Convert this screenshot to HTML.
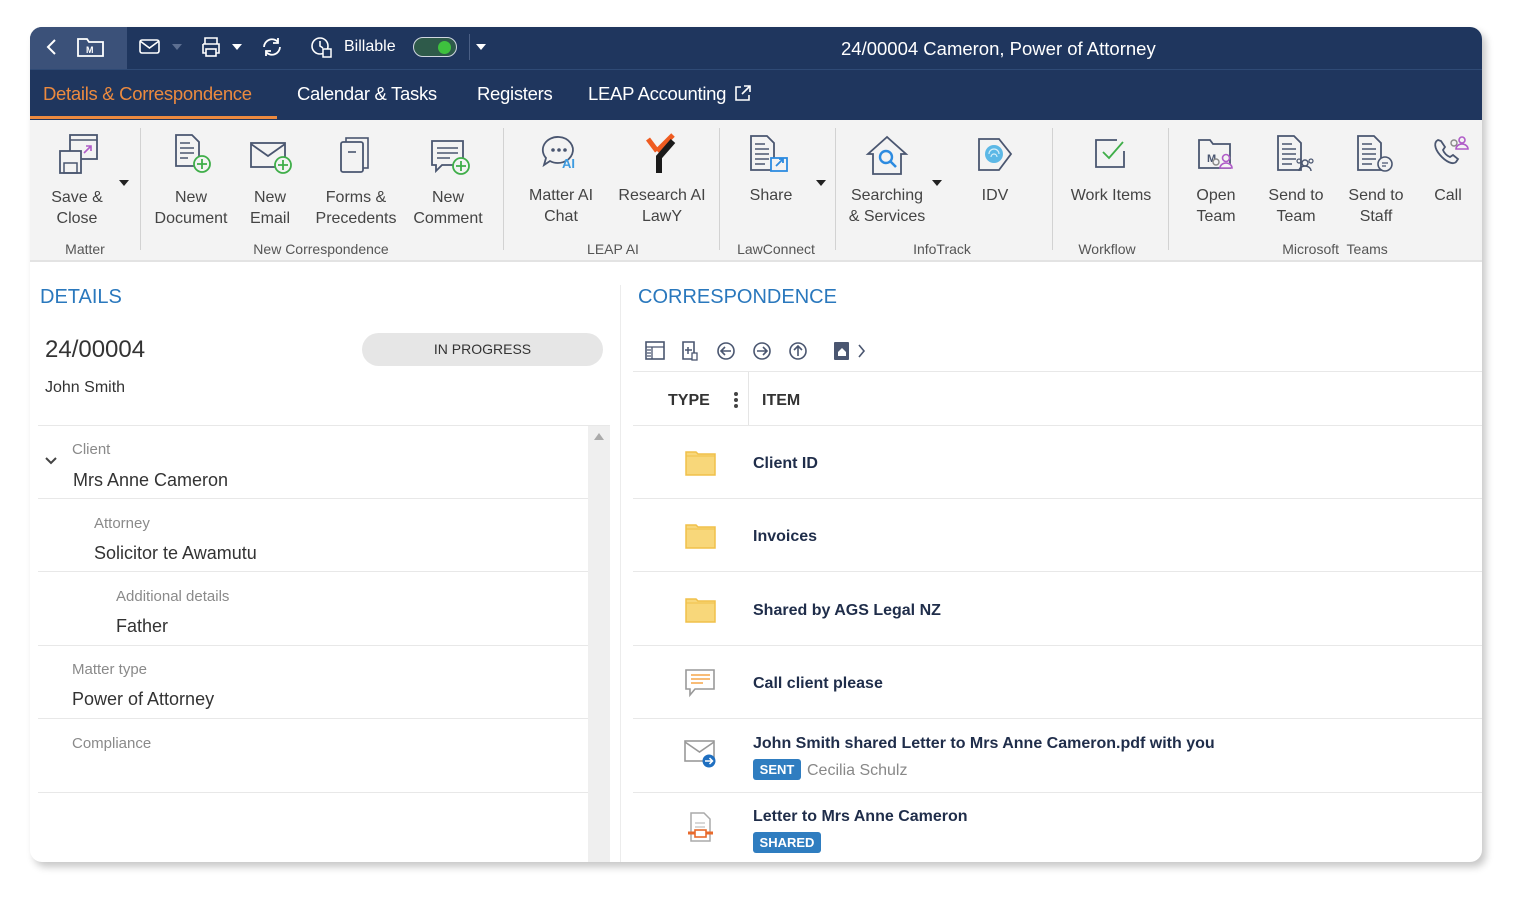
<!DOCTYPE html>
<html><head><meta charset="utf-8">
<style>
*{margin:0;padding:0;box-sizing:border-box}
body{width:1518px;height:900px;background:#fff;font-family:"Liberation Sans",sans-serif;position:relative;overflow:hidden}
.a{position:absolute;white-space:nowrap}
#win{position:absolute;left:30px;top:27px;width:1452px;height:835px;border-radius:12px;overflow:hidden;background:#fff;box-shadow:4px 5px 8px rgba(0,0,0,.22)}
.rb{position:absolute;text-align:center;color:#444;font-size:16px;line-height:21px}
.gl{position:absolute;top:241px;color:#555;font-size:14px;transform:translateX(-50%)}
.sep{position:absolute;top:128px;width:1px;height:122px;background:#d2d2d2}
.lbl{position:absolute;color:#8a8a8a;font-size:15px}
.val{position:absolute;color:#333;font-size:18px}
.hl{position:absolute;height:1px;background:#e8e8e8}
.it{position:absolute;left:753px;color:#1f2d4a;font-size:16px;font-weight:bold}
.tri{position:absolute;width:0;height:0;border-left:5px solid transparent;border-right:5px solid transparent;border-top:6px solid #222}
svg{position:absolute}
</style></head><body>
<div id="win"></div>
<div class="a" style="left:30px;top:27px;width:1452px;height:93px;background:#1f365e;border-radius:12px 12px 0 0"></div>
<div class="a" style="left:30px;top:27px;width:97px;height:42px;background:#3b5179;border-radius:12px 0 0 0"></div>
<div class="a" style="left:30px;top:69px;width:1452px;height:1px;background:#2f4a75"></div>
<svg style="left:44px;top:37px" width="16" height="20"><path d="M11 3 L4 10 L11 17" stroke="#fff" stroke-width="2" fill="none"/></svg>
<svg style="left:76px;top:35px" width="30" height="24"><path d="M2 4h9l2 3h14v14H2z" stroke="#fff" stroke-width="1.8" fill="none"/><text x="10" y="18" font-size="9" fill="#fff" font-family="Liberation Sans" font-weight="bold">M</text></svg>
<svg style="left:139px;top:39px" width="22" height="16"><rect x="1" y="1" width="19" height="13" rx="2" stroke="#fff" stroke-width="1.6" fill="none"/><path d="M1 2l9.5 7L20 2" stroke="#fff" stroke-width="1.6" fill="none"/></svg>
<div class="tri" style="left:172px;top:44px;border-top-color:#5c6f91"></div>
<svg style="left:200px;top:36px" width="22" height="22"><path d="M5 8V2h12v6M3 8h16v9h-3M6 17H3V8" stroke="#fff" stroke-width="1.6" fill="none"/><rect x="6" y="13" width="10" height="7" stroke="#fff" stroke-width="1.6" fill="none"/></svg>
<div class="tri" style="left:232px;top:44px;border-top-color:#fff"></div>
<svg style="left:260px;top:36px" width="24" height="22"><path d="M4 11a8 8 0 0 1 14-5M20 11a8 8 0 0 1-14 5" stroke="#fff" stroke-width="1.8" fill="none"/><path d="M18 2v5h-5M6 20v-5h5" stroke="#fff" stroke-width="1.8" fill="none"/></svg>
<svg style="left:310px;top:36px" width="24" height="24"><circle cx="10" cy="10" r="8" stroke="#fff" stroke-width="1.6" fill="none"/><path d="M10 5v5l3 2" stroke="#fff" stroke-width="1.6" fill="none"/><rect x="13" y="13" width="8" height="8" fill="#1f365e" stroke="#fff" stroke-width="1.5"/></svg>
<div class="a" style="left:344px;top:38px;color:#fff;font-size:16px">Billable</div>
<div class="a" style="left:413px;top:37px;width:44px;height:20px;border-radius:10px;background:#2e5a4a;border:1.5px solid #cfd6e0"></div>
<div class="a" style="left:438px;top:41px;width:13px;height:13px;border-radius:50%;background:#3ec23e"></div>
<div class="a" style="left:469px;top:34px;width:1px;height:26px;background:#4a5f85"></div>
<div class="tri" style="left:476px;top:44px;border-top-color:#fff"></div>
<div class="a" style="left:841px;top:38px;color:#fff;font-size:18.5px">24/00004 Cameron, Power of Attorney</div>
<div class="a" style="left:43px;top:83px;color:#ec8a3f;font-size:18.5px;letter-spacing:-0.3px">Details &amp; Correspondence</div>
<div class="a" style="left:30px;top:116px;width:247px;height:3px;background:#ec8a3f"></div>
<div class="a" style="left:297px;top:83px;color:#fff;font-size:18.5px;letter-spacing:-0.3px">Calendar &amp; Tasks</div>
<div class="a" style="left:477px;top:83px;color:#fff;font-size:18.5px;letter-spacing:-0.3px">Registers</div>
<div class="a" style="left:588px;top:83px;color:#fff;font-size:18.5px;letter-spacing:-0.3px">LEAP Accounting</div>
<svg style="left:734px;top:84px" width="18" height="18"><path d="M7 3H2v13h13v-5M10 2h6v6M16 2L8 10" stroke="#fff" stroke-width="1.6" fill="none"/></svg>
<div class="a" style="left:30px;top:120px;width:1452px;height:142px;background:#f3f3f3;border-bottom:2px solid #e3e3e3"></div>
<div class="sep" style="left:140px"></div><div class="sep" style="left:503px"></div><div class="sep" style="left:719px"></div><div class="sep" style="left:835px"></div><div class="sep" style="left:1052px"></div><div class="sep" style="left:1168px"></div>
<svg style="left:58px;top:133px" width="42" height="44"><rect x="12" y="2" width="27" height="24" stroke="#4a5670" stroke-width="1.8" fill="#f3f3f3"/><path d="M12 7h27" stroke="#4a5670" stroke-width="1.5"/><path d="M26 20l7-7M28 13h5v5" stroke="#b05cc8" stroke-width="1.6" fill="none"/><rect x="2" y="18" width="21" height="22" stroke="#4a5670" stroke-width="1.8" fill="#f3f3f3"/><rect x="6" y="30" width="13" height="10" stroke="#4a5670" stroke-width="1.5" fill="none"/></svg>
<div class="tri" style="left:119px;top:180px"></div>
<svg style="left:174px;top:133px" width="40" height="42"><path d="M2 2h16l7 7v24H2z" stroke="#4a5670" stroke-width="1.8" fill="none"/><path d="M6 10h10M6 15h14M6 20h14M6 25h8" stroke="#4a5670" stroke-width="1.4"/><circle cx="28" cy="31" r="8" fill="#f3f3f3" stroke="#3fae49" stroke-width="1.8"/><path d="M28 26v10M23 31h10" stroke="#3fae49" stroke-width="1.8"/></svg>
<svg style="left:250px;top:141px" width="42" height="36"><rect x="1" y="2" width="34" height="24" stroke="#4a5670" stroke-width="1.8" fill="none"/><path d="M1 3l17 12L35 3" stroke="#4a5670" stroke-width="1.8" fill="none"/><circle cx="33" cy="24" r="8" fill="#f3f3f3" stroke="#3fae49" stroke-width="1.8"/><path d="M33 19v10M28 24h10" stroke="#3fae49" stroke-width="1.8"/></svg>
<svg style="left:339px;top:136px" width="34" height="40"><rect x="7" y="2" width="22" height="30" stroke="#4a5670" stroke-width="1.6" fill="none"/><rect x="2" y="6" width="22" height="30" rx="2" stroke="#4a5670" stroke-width="1.8" fill="#f3f3f3"/><path d="M9 16h8" stroke="#4a5670" stroke-width="1.6"/></svg>
<svg style="left:430px;top:139px" width="42" height="38"><path d="M2 2h31v24H12l-6 6v-6H2z" stroke="#4a5670" stroke-width="1.8" fill="none"/><path d="M7 9h21M7 14h21M7 19h13" stroke="#4a5670" stroke-width="1.4"/><circle cx="31" cy="27" r="8" fill="#f3f3f3" stroke="#3fae49" stroke-width="1.8"/><path d="M31 22v10M26 27h10" stroke="#3fae49" stroke-width="1.8"/></svg>
<svg style="left:541px;top:134px" width="40" height="40"><path d="M18 3a15 13 0 1 1-9 24l-6 4 2-7A15 13 0 0 1 18 3z" stroke="#4a5670" stroke-width="1.8" fill="none"/><circle cx="12" cy="16" r="1.8" fill="#4a5670"/><circle cx="18" cy="16" r="1.8" fill="#4a5670"/><circle cx="24" cy="16" r="1.8" fill="#4a5670"/><text x="21" y="34" font-size="13" font-weight="bold" fill="#3d9be0" font-family="Liberation Sans">AI</text></svg>
<svg style="left:645px;top:133px" width="34" height="44"><path d="M3 6l9 12M12 18l16-16" stroke="#ef5b20" stroke-width="5" fill="none"/><path d="M28 8L14 24v16" stroke="#1a1a1a" stroke-width="6" fill="none"/></svg>
<svg style="left:749px;top:134px" width="42" height="40"><path d="M2 2h16l7 7v27H2z" stroke="#4a5670" stroke-width="1.8" fill="#f3f3f3"/><path d="M6 10h10M6 15h14M6 20h14M6 25h14M6 30h10" stroke="#4a5670" stroke-width="1.4"/><rect x="22" y="24" width="16" height="13" fill="#f3f3f3" stroke="#2d8be0" stroke-width="1.8"/><path d="M27 32l6-6M30 25h4v4" stroke="#2d8be0" stroke-width="1.8" fill="none"/></svg>
<div class="tri" style="left:816px;top:180px"></div>
<svg style="left:865px;top:135px" width="44" height="42"><path d="M22 2L3 19h5v20h28V19h5z" stroke="#4a5670" stroke-width="1.8" fill="none"/><circle cx="21" cy="22" r="6" stroke="#2d8be0" stroke-width="2.4" fill="none"/><path d="M25 26l6 6" stroke="#2d8be0" stroke-width="2.6"/></svg>
<div class="tri" style="left:932px;top:180px"></div>
<svg style="left:976px;top:135px" width="40" height="40"><path d="M3 4h20l12 15-12 16H3z" stroke="#4a5670" stroke-width="1.8" fill="none"/><circle cx="18" cy="19" r="9" fill="#5cb8e6"/><path d="M13 19a5 5 0 0 1 10 0M15 22a3 3 0 0 1 6 0" stroke="#d6eef9" stroke-width="1.2" fill="none"/></svg>
<svg style="left:1093px;top:137px" width="38" height="34"><path d="M24 3H3v27h28V14" stroke="#4a5670" stroke-width="1.8" fill="none"/><path d="M10 15l6 6 14-16" stroke="#3fae49" stroke-width="1.8" fill="none"/></svg>
<svg style="left:1197px;top:138px" width="40" height="36"><path d="M2 2h11l3 4h17v24H2z" stroke="#4a5670" stroke-width="1.8" fill="none"/><text x="10" y="24" font-size="11" font-weight="bold" fill="#4a5670" font-family="Liberation Sans">M</text><circle cx="19" cy="24" r="3" stroke="#888" stroke-width="1.4" fill="#f3f3f3"/><circle cx="29" cy="20" r="3.5" stroke="#b05cc8" stroke-width="1.6" fill="#f3f3f3"/><path d="M23 30a6 5 0 0 1 12 0z" stroke="#b05cc8" stroke-width="1.6" fill="#f3f3f3"/></svg>
<svg style="left:1276px;top:134px" width="42" height="40"><path d="M2 2h16l7 7v27H2z" stroke="#4a5670" stroke-width="1.8" fill="#f3f3f3"/><path d="M6 10h10M6 15h14M6 20h14M6 25h14M6 30h10" stroke="#4a5670" stroke-width="1.4"/><circle cx="29" cy="29" r="3" stroke="#4a5670" stroke-width="1.4" fill="#f3f3f3"/><path d="M23 37a6 5 0 0 1 12 0" stroke="#4a5670" stroke-width="1.4" fill="none"/><circle cx="23" cy="27" r="2" stroke="#4a5670" stroke-width="1.2" fill="none"/><circle cx="35" cy="27" r="2" stroke="#4a5670" stroke-width="1.2" fill="none"/></svg>
<svg style="left:1356px;top:134px" width="42" height="40"><path d="M2 2h16l7 7v27H2z" stroke="#4a5670" stroke-width="1.8" fill="#f3f3f3"/><path d="M6 10h10M6 15h14M6 20h14M6 25h14M6 30h10" stroke="#4a5670" stroke-width="1.4"/><circle cx="29" cy="30" r="7" stroke="#4a5670" stroke-width="1.6" fill="#f3f3f3"/><path d="M26 29h6M26 32h4" stroke="#4a5670" stroke-width="1.2"/></svg>
<svg style="left:1432px;top:134px" width="40" height="36"><path d="M6 6c-4 2-4 8 2 15s13 10 16 7l2-3-5-4-3 2c-3-1-6-4-7-7l2-3-4-6z" stroke="#4a5670" stroke-width="1.8" fill="none"/><circle cx="22" cy="9" r="3" stroke="#888" stroke-width="1.4" fill="none"/><circle cx="30" cy="6" r="3" stroke="#b05cc8" stroke-width="1.6" fill="none"/><path d="M24 15a6 5 0 0 1 12 0z" stroke="#b05cc8" stroke-width="1.6" fill="none"/></svg>
<div class="rb" style="left:37px;top:187px;width:80px">Save &amp;<br>Close</div>
<div class="rb" style="left:141px;top:187px;width:100px">New<br>Document</div>
<div class="rb" style="left:230px;top:187px;width:80px">New<br>Email</div>
<div class="rb" style="left:306px;top:187px;width:100px">Forms &amp;<br>Precedents</div>
<div class="rb" style="left:398px;top:187px;width:100px">New<br>Comment</div>
<div class="rb" style="left:516px;top:185px;width:90px">Matter AI<br>Chat</div>
<div class="rb" style="left:607px;top:185px;width:110px">Research AI<br>LawY</div>
<div class="rb" style="left:731px;top:185px;width:80px">Share</div>
<div class="rb" style="left:832px;top:185px;width:110px">Searching<br>&amp; Services</div>
<div class="rb" style="left:965px;top:185px;width:60px">IDV</div>
<div class="rb" style="left:1061px;top:185px;width:100px">Work Items</div>
<div class="rb" style="left:1176px;top:185px;width:80px">Open<br>Team</div>
<div class="rb" style="left:1256px;top:185px;width:80px">Send to<br>Team</div>
<div class="rb" style="left:1336px;top:185px;width:80px">Send to<br>Staff</div>
<div class="rb" style="left:1418px;top:185px;width:60px">Call</div>
<div class="gl" style="left:85px">Matter</div>
<div class="gl" style="left:321px">New Correspondence</div>
<div class="gl" style="left:613px">LEAP AI</div>
<div class="gl" style="left:776px">LawConnect</div>
<div class="gl" style="left:942px">InfoTrack</div>
<div class="gl" style="left:1107px">Workflow</div>
<div class="gl" style="left:1335px">Microsoft&nbsp; Teams</div>
<div class="a" style="left:40px;top:286px;color:#2a78bd;font-size:20px">DETAILS</div>
<div class="a" style="left:45px;top:336px;color:#333;font-size:24px">24/00004</div>
<div class="a" style="left:362px;top:333px;width:241px;height:33px;border-radius:17px;background:#e6e6e6;color:#333;font-size:14px;text-align:center;line-height:33px">IN PROGRESS</div>
<div class="a" style="left:45px;top:379px;color:#333;font-size:16px">John Smith</div>
<div class="hl" style="left:38px;top:425px;width:572px"></div>
<div class="a" style="left:588px;top:426px;width:22px;height:436px;background:#efefef"></div>
<div class="a" style="left:594px;top:433px;width:0;height:0;border-left:5px solid transparent;border-right:5px solid transparent;border-bottom:7px solid #aaa"></div>
<svg style="left:44px;top:456px" width="14" height="10"><path d="M2 2l5 5 5-5" stroke="#444" stroke-width="2" fill="none"/></svg>
<div class="lbl" style="left:72px;top:441px">Client</div>
<div class="val" style="left:73px;top:470px">Mrs Anne Cameron</div>
<div class="hl" style="left:38px;top:498px;width:550px"></div>
<div class="lbl" style="left:94px;top:515px">Attorney</div>
<div class="val" style="left:94px;top:543px">Solicitor te Awamutu</div>
<div class="hl" style="left:38px;top:571px;width:550px"></div>
<div class="lbl" style="left:116px;top:588px">Additional details</div>
<div class="val" style="left:116px;top:616px">Father</div>
<div class="hl" style="left:38px;top:645px;width:550px"></div>
<div class="lbl" style="left:72px;top:661px">Matter type</div>
<div class="val" style="left:72px;top:689px">Power of Attorney</div>
<div class="hl" style="left:38px;top:718px;width:550px"></div>
<div class="lbl" style="left:72px;top:735px">Compliance</div>
<div class="hl" style="left:38px;top:792px;width:550px"></div>
<div class="a" style="left:620px;top:285px;width:1px;height:577px;background:#ececec"></div>
<div class="a" style="left:638px;top:286px;color:#2a78bd;font-size:20px">CORRESPONDENCE</div>
<svg style="left:645px;top:340px" width="230" height="22"><rect x="1" y="2" width="18" height="17" stroke="#4a5670" stroke-width="1.6" fill="none"/><path d="M1 7h18M7 7v12M2 10h4M2 13h4M2 16h4" stroke="#4a5670" stroke-width="1.3"/>
<path d="M38 2h11v17H38z" stroke="#4a5670" stroke-width="1.6" fill="none"/><path d="M43 7v7M40 10h7" stroke="#4a5670" stroke-width="1.5"/><rect x="47" y="13" width="5" height="7" fill="#fff" stroke="#4a5670" stroke-width="1.3"/>
<circle cx="81" cy="11" r="8" stroke="#4a5670" stroke-width="1.6" fill="none"/><path d="M86 11h-9M80 7l-4 4 4 4" stroke="#4a5670" stroke-width="1.6" fill="none"/>
<circle cx="117" cy="11" r="8" stroke="#4a5670" stroke-width="1.6" fill="none"/><path d="M112 11h9M118 7l4 4-4 4" stroke="#4a5670" stroke-width="1.6" fill="none"/>
<circle cx="153" cy="11" r="8" stroke="#4a5670" stroke-width="1.6" fill="none"/><path d="M153 16V7M149 10l4-4 4 4" stroke="#4a5670" stroke-width="1.6" fill="none"/>
<rect x="189" y="2" width="15" height="18" rx="1" fill="#4a5670"/><path d="M193 12l4-4 4 4v4h-8z" fill="#fff"/><path d="M214 5l5 6-5 6" stroke="#4a5670" stroke-width="1.6" fill="none"/></svg>
<div class="hl" style="left:633px;top:371px;width:849px"></div>
<div class="a" style="left:668px;top:392px;color:#333;font-size:16px;font-weight:bold">TYPE</div>
<div class="a" style="left:734px;top:392px;width:4px;height:4px;border-radius:2px;background:#444;box-shadow:0 6px 0 #444,0 12px 0 #444"></div>
<div class="a" style="left:748px;top:372px;width:1px;height:53px;background:#e5e5e5"></div>
<div class="a" style="left:762px;top:392px;color:#333;font-size:16px;font-weight:bold">ITEM</div>
<div class="hl" style="left:633px;top:425px;width:849px"></div>
<svg style="left:685px;top:450px" width="32" height="26"><path d="M1 2h10l2 2h17v21H1z" fill="#f8d77a" stroke="#f0c04a" stroke-width="1.5"/><path d="M1 6h29" stroke="#f0c04a"/></svg>
<div class="it" style="top:455px">Client ID</div>
<div class="hl" style="left:633px;top:498px;width:849px"></div>
<svg style="left:685px;top:523px" width="32" height="26"><path d="M1 2h10l2 2h17v21H1z" fill="#f8d77a" stroke="#f0c04a" stroke-width="1.5"/><path d="M1 6h29" stroke="#f0c04a"/></svg>
<div class="it" style="top:528px">Invoices</div>
<div class="hl" style="left:633px;top:571px;width:849px"></div>
<svg style="left:685px;top:597px" width="32" height="26"><path d="M1 2h10l2 2h17v21H1z" fill="#f8d77a" stroke="#f0c04a" stroke-width="1.5"/><path d="M1 6h29" stroke="#f0c04a"/></svg>
<div class="it" style="top:602px">Shared by AGS Legal NZ</div>
<div class="hl" style="left:633px;top:645px;width:849px"></div>
<svg style="left:684px;top:668px" width="34" height="30"><path d="M2 2h28v19H11l-5 6v-6H2z" stroke="#999" stroke-width="1.6" fill="#fff"/><path d="M7 7h19M7 11h19M7 15h12" stroke="#f5a54a" stroke-width="1.6"/></svg>
<div class="it" style="top:675px">Call client please</div>
<div class="hl" style="left:633px;top:718px;width:849px"></div>
<svg style="left:684px;top:739px" width="36" height="30"><rect x="1" y="2" width="29" height="20" stroke="#999" stroke-width="1.6" fill="#fff"/><path d="M1 3l14.5 10L30 3" stroke="#999" stroke-width="1.6" fill="none"/><circle cx="25" cy="22" r="6.5" fill="#1f6fc0"/><path d="M21 22h7M25.5 19l3 3-3 3" stroke="#fff" stroke-width="1.5" fill="none"/></svg>
<div class="it" style="top:735px">John Smith shared Letter to Mrs Anne Cameron.pdf with you</div>
<div class="a" style="left:753px;top:759px;width:48px;height:21px;border-radius:3px;background:#2f7dc0;color:#fff;font-size:13px;font-weight:bold;text-align:center;line-height:21px">SENT</div>
<div class="a" style="left:807px;top:762px;color:#888;font-size:16px">Cecilia Schulz</div>
<div class="hl" style="left:633px;top:792px;width:849px"></div>
<svg style="left:686px;top:811px" width="32" height="34"><path d="M5 2h13l6 6v22H5z" stroke="#aaa" stroke-width="1.5" fill="#fff"/><path d="M9 12h10M9 16h10" stroke="#ccc" stroke-width="1.4"/><rect x="9" y="19" width="11" height="7" stroke="#e86a2c" stroke-width="1.6" fill="#fff"/><path d="M2 22h7M20 22h7" stroke="#e86a2c" stroke-width="3"/></svg>
<div class="it" style="top:808px">Letter to Mrs Anne Cameron</div>
<div class="a" style="left:753px;top:832px;width:68px;height:21px;border-radius:3px;background:#2f7dc0;color:#fff;font-size:13px;font-weight:bold;text-align:center;line-height:21px">SHARED</div>
</body></html>
